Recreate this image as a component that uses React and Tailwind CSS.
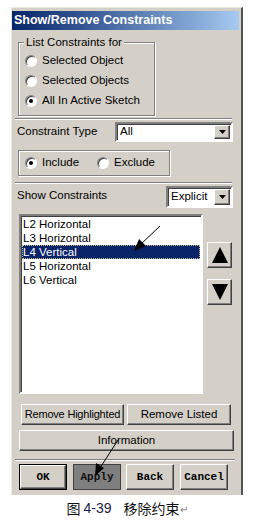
import React from "react";

const ui = { fontFamily: '"Liberation Sans", Arial, sans-serif' };
const mono = { fontFamily: '"Liberation Mono", "Courier New", monospace' };

const Radio = ({ checked, label }) => (
  <div className="flex items-center h-5">
    <span className="ml-[6px] w-3 h-3 rounded-full bg-white border border-t-[#808080] border-l-[#808080] border-r-white border-b-white shadow-[inset_1px_1px_0_#404040] flex items-center justify-center">
      {checked && <span className="w-1 h-1 rounded-full bg-black" />}
    </span>
    <span className="ml-[5px]">{label}</span>
  </div>
);

const Groove = ({ className = "" }) => (
  <div className={"h-[2px] border-t border-t-[#808080] border-b border-b-white " + className} />
);

const Select = ({ value, className = "" }) => (
  <div
    className={
      "flex items-center bg-white border-2 border-t-[#808080] border-l-[#808080] border-r-white border-b-white shadow-[inset_1px_1px_0_#404040] " +
      className
    }
  >
    <span className="flex-1 pl-[3px]">{value}</span>
    <span className="w-4 h-full mr-[1px] py-[1px] flex">
      <span className="flex-1 flex items-center justify-center bg-[#d4d0c8] border border-t-white border-l-white border-r-[#404040] border-b-[#404040] shadow-[inset_-1px_-1px_0_#808080]">
        <svg width="7" height="4" viewBox="0 0 7 4">
          <path d="M0 0H7L3.5 4Z" fill="#000" />
        </svg>
      </span>
    </span>
  </div>
);

const btn =
  "flex items-center justify-center bg-[#d4d0c8] border border-t-white border-l-white border-r-[#404040] border-b-[#404040] shadow-[inset_-1px_-1px_0_#808080]";

const ArrowBtn = ({ up }) => (
  <div className={"w-[25px] h-[26px] " + btn}>
    <svg width="18" height="18" viewBox="0 0 18 18">
      {up ? <path d="M9 1L17 17H1Z" fill="#000" /> : <path d="M1 1H17L9 17Z" fill="#000" />}
    </svg>
  </div>
);

const items = ["L2 Horizontal", "L3 Horizontal", "L4 Vertical", "L5 Horizontal", "L6 Vertical"];

export default function App() {
  return (
    <div className="relative w-[266px] h-[525px] bg-white overflow-hidden text-[11.5px] text-black" style={ui}>
      <div className="ml-[11px] mt-[7px] w-[232px] h-[488px] bg-[#d4d0c8] border-t border-l border-t-[#ece9d8] border-l-[#ece9d8] border-r-2 border-r-[#555555] flex flex-col">
        <div className="mt-[3px] w-[227px] h-[19px] flex items-center pl-[2px] bg-gradient-to-r from-[#0a246a] to-[#a6caf0] text-white font-bold text-[12.5px]">
          Show/Remove Constraints
        </div>

        <fieldset className="mt-[5px] ml-[6px] w-[137px] border border-[#808080] shadow-[inset_1px_1px_0_#fff,1px_1px_0_#fff] pt-[2px] pb-[4px]">
          <legend className="ml-[5px] px-[2px] bg-[#d4d0c8] leading-[14px]">List Constraints for</legend>
          <Radio label="Selected Object" />
          <Radio label="Selected Objects" />
          <Radio checked label="All In Active Sketch" />
        </fieldset>

        <Groove className="mt-[2px] ml-[3px] w-[217px]" />

        <div className="mt-[2px] ml-[5px] flex items-center h-[20px]">
          <span className="flex-1">Constraint Type</span>
          <Select value="All" className="w-[118px] h-[20px] mr-[8px]" />
        </div>

        <div className="mt-[8px] ml-[6px] w-[152px] h-[26px] border border-[#808080] shadow-[inset_1px_1px_0_#fff,1px_1px_0_#fff] flex items-center">
          <Radio checked label="Include" />
          <span className="w-[12px]" />
          <Radio label="Exclude" />
        </div>

        <Groove className="mt-[6px] ml-[3px] w-[217px]" />

        <div className="mt-[2px] ml-[5px] flex items-center h-[22px]">
          <span className="flex-1 -mt-[3px]">Show Constraints</span>
          <Select value="Explicit" className="w-[67px] h-[22px] mr-[8px]" />
        </div>

        <div className="mt-[6px] ml-[7px] flex gap-[4px] h-[180px]">
          <div className="w-[184px] h-full bg-white border-2 border-t-[#808080] border-l-[#808080] border-r-white border-b-white shadow-[inset_1px_1px_0_#404040] pl-[1px] pr-[1px] pt-[1px] leading-[14px]">
            {items.map((t) =>
              t === "L4 Vertical" ? (
                <div
                  key={t}
                  className="h-[14px] pl-[1px] bg-[#0a246a] text-white outline-1 outline-dotted outline-[#c9c08a] -outline-offset-1"
                >
                  {t}
                </div>
              ) : (
                <div key={t} className="h-[14px] pl-[1px]">
                  {t}
                </div>
              )
            )}
          </div>
          <div className="flex flex-col pt-[28px] gap-[11px]">
            <ArrowBtn up />
            <ArrowBtn />
          </div>
        </div>

        <div className="mt-[10px] ml-[9px] flex gap-[3px] h-[21px]">
          <div className={"w-[103px] whitespace-nowrap text-[11px] tracking-[-0.2px] " + btn}>Remove Highlighted</div>
          <div className={"w-[104px] whitespace-nowrap " + btn}>Remove Listed</div>
        </div>

        <div className={"mt-[5px] ml-[7px] w-[215px] h-[21px] " + btn}>Information</div>

        <Groove className="mt-[8px] ml-[3px] w-[220px]" />

        <div className="mt-[3px] ml-[7px] flex h-[26px] text-[11px] font-bold" style={mono}>
          <div className="w-[48px] h-full border border-black flex">
            <div className={"flex-1 " + btn}>OK</div>
          </div>
          <div className="ml-[6px] w-[48px] h-full flex items-center justify-center bg-[#7f7f7f] border border-[#404040] text-[#111]">
            Apply
          </div>
          <div className={"ml-[5px] w-[48px] h-full " + btn}>Back</div>
          <div className={"ml-[6px] w-[48px] h-full " + btn}>Cancel</div>
        </div>
      </div>

      <div
        className="mt-[3px] h-[20px] flex items-center justify-center pr-[12px] text-[14px] text-[#111]"
        style={{ fontFamily: '"Noto Sans CJK SC", "Liberation Sans", sans-serif' }}
      >
        <span>图</span>
        <span className="ml-[3px] text-[#1c1c4a]" style={ui}>4-39</span>
        <span className="ml-[12px]">移除约束</span>
        <span className="text-[10px] text-[#777]">↵</span>
      </div>

      <svg className="absolute left-0 top-0 pointer-events-none" width="266" height="525" viewBox="0 0 266 525">
        <line x1="160" y1="226" x2="140" y2="245" stroke="#000" strokeWidth="1" />
        <path d="M134 251L139 239L146 246Z" fill="#000" />
        <line x1="118" y1="440" x2="100" y2="468" stroke="#000" strokeWidth="1" />
        <path d="M95 476L96 463L104 468Z" fill="#000" />
      </svg>
    </div>
  );
}
